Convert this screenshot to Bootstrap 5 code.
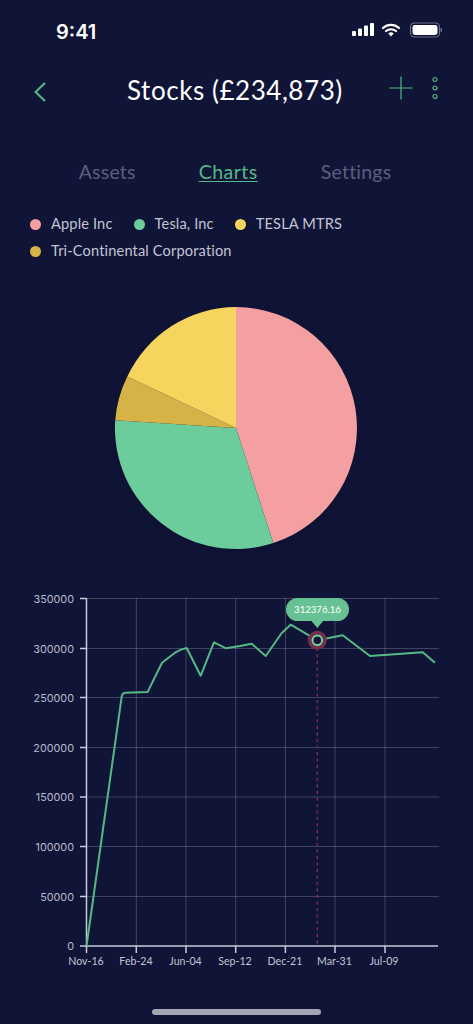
<!doctype html>
<html lang="en">
<head>
<meta charset="utf-8">
<meta name="viewport" content="width=device-width, initial-scale=1">
<title>Stocks</title>
<link href="https://cdn.jsdelivr.net/npm/bootstrap@5.3.0/dist/css/bootstrap.min.css" rel="stylesheet">
<style>
html,body{background:#101437;height:100%}
body{font-family:Lato,"Liberation Sans",sans-serif;color:#fff;overflow:hidden}
.screen{width:473px;height:1024px}
.statusrow{height:62px;padding:21px 29px 0 56px}
.clock{font-family:Inter,"Liberation Sans",sans-serif;font-size:20px;font-weight:600;line-height:22px}
.sysicons{margin-top:1px}
.headrow{height:56px;padding:0 34.5px 0 32px}
.backslot{width:95px;padding-top:2px}
.pagetitle{font-size:26px;font-weight:400;line-height:32px;margin:0 auto 0 0;letter-spacing:.55px;white-space:nowrap}
.actionset{gap:18px;margin-bottom:4px}
.tabrow{margin-top:42px;height:28px;gap:63px;padding-right:3px}
.tablink{padding:0;color:#5c5f7e;font-size:19.5px;line-height:24px;letter-spacing:.2px}
.tablink.active{color:#54b985;letter-spacing:.5px;text-decoration:underline;text-decoration-thickness:1px;text-underline-offset:2px}
.tablink:hover{color:#5c5f7e}
.legendbox{margin-top:25px;padding:0 30px;column-gap:21px;row-gap:5px;height:54px}
.legenditem{font-size:14.6px;line-height:22px;color:#c3c4d2;gap:10px;letter-spacing:.15px}
.swatch{width:11px;height:11px;border-radius:50%;flex:none}
.c-pink{background:#f4a0a2}.c-green{background:#6ccc9c}.c-yellow{background:#f6d55f}.c-gold{background:#d6b346}
.piebox{margin-top:28px;height:265px;padding-left:100px}
.piebox svg{filter:drop-shadow(0 2px 6px rgba(5,8,30,.35))}
.chartbox{margin-top:20px;height:400px}
.chartbox svg text{font-family:Lato,"Liberation Sans",sans-serif;fill:#c3c4d2;font-size:10.6px}
.chartbox svg text.ylab{font-family:Inter,"Liberation Sans",sans-serif;font-size:10.8px;fill:#b9bacb}
.chartbox svg text.tip{fill:#fff;font-size:9.6px}
.homebar{width:169px;height:6px;border-radius:3px;background:#a5a6b3;margin:29px auto 0}
</style>
</head>
<body>
<main class="screen d-flex flex-column">
  <div class="statusrow d-flex justify-content-between align-items-start">
    <span class="clock">9:41</span>
    <svg class="sysicons" width="92" height="16" viewBox="0 0 92 16" aria-hidden="true">
      <rect x="0" y="9" width="4" height="5" rx="1" fill="#fff"/>
      <rect x="6" y="6.5" width="4" height="7.5" rx="1" fill="#fff"/>
      <rect x="12" y="3.5" width="4" height="10.5" rx="1" fill="#fff"/>
      <rect x="18" y="1" width="4" height="13" rx="1" fill="#fff"/>
      <path d="M31 6 A12 12 0 0 1 47 6" fill="none" stroke="#fff" stroke-width="2.2" stroke-linecap="round"/>
      <path d="M34 9 A8 8 0 0 1 44 9" fill="none" stroke="#fff" stroke-width="2.2" stroke-linecap="round"/>
      <path d="M36.3 11.6 L39 14.4 L41.7 11.6 A4 4 0 0 0 36.3 11.6Z" fill="#fff"/>
      <rect x="58.5" y="1" width="29" height="14" rx="4" fill="none" stroke="#6d6f85" stroke-width="1.2"/>
      <rect x="60.5" y="3" width="25" height="10" rx="2.4" fill="#fff"/>
      <rect x="88.5" y="6" width="1.5" height="4" rx=".7" fill="#6d6f85"/>
    </svg>
  </div>
  <header class="headrow d-flex align-items-center">
    <div class="backslot">
      <svg width="16" height="22" viewBox="0 0 16 22" aria-hidden="true"><path d="M13 2 L3.5 11 L13 20" fill="none" stroke="#54b985" stroke-width="2"/></svg>
    </div>
    <h1 class="pagetitle">Stocks (£234,873)</h1>
    <div class="actionset d-flex align-items-center">
      <svg width="24" height="24" viewBox="0 0 24 24" aria-hidden="true"><path d="M12 0.5V23.5M.5 12H23.5" stroke="#54b985" stroke-width="1.2"/></svg>
      <svg width="8" height="24" viewBox="0 0 8 24" aria-hidden="true"><g fill="none" stroke="#54b985" stroke-width="1.2"><circle cx="4" cy="3.5" r="2"/><circle cx="4" cy="12" r="2"/><circle cx="4" cy="20.5" r="2"/></g></svg>
    </div>
  </header>
  <nav class="nav tabrow justify-content-center align-items-start">
    <a class="nav-link tablink" href="#">Assets</a>
    <a class="nav-link tablink active" href="#">Charts</a>
    <a class="nav-link tablink" href="#">Settings</a>
  </nav>
  <div class="legendbox d-flex flex-wrap align-content-start">
    <div class="legenditem d-flex align-items-center"><span class="swatch c-pink"></span>Apple Inc</div>
    <div class="legenditem d-flex align-items-center"><span class="swatch c-green"></span>Tesla, Inc</div>
    <div class="legenditem d-flex align-items-center"><span class="swatch c-yellow"></span>TESLA MTRS</div>
    <div class="legenditem d-flex align-items-center w-100"><span class="swatch c-gold"></span>Tri-Continental Corporation</div>
  </div>
  <div class="piebox">
    <svg width="270" height="265" viewBox="100 295 270 265" aria-label="Pie chart">
      <path d="M236 428 L236 307 A121 121 0 0 1 273.3 543.1Z" fill="#f4a0a2"/>
      <path d="M236 428 L273.3 543.1 A121 121 0 0 1 115.2 420.3Z" fill="#6ccc9c"/>
      <path d="M236 428 L115.2 420.3 A121 121 0 0 1 127.3 376.6Z" fill="#d6b346"/>
      <path d="M236 428 L127.3 376.6 A121 121 0 0 1 236 307Z" fill="#f6d55f"/>
    </svg>
  </div>
  <div class="chartbox">
    <svg width="473" height="400" viewBox="0 580 473 400" aria-label="Line chart">
      <g stroke="#fff" stroke-opacity=".2" stroke-width="1">
        <path d="M86.5 598.5H439M86.5 648.5H439M86.5 697.5H439M86.5 747.5H439M86.5 797H439M86.5 846.5H439M86.5 896.5H439"/>
        <path d="M136.3 598V946M186 598V946M235.7 598V946M285.4 598V946M335 598V946M385 598V946"/>
      </g>
      <g stroke="#c9cad9" stroke-width="1.5" fill="none">
        <path d="M86.5 598V946H438"/>
        <path d="M80 598.5H86M80 648.5H86M80 697.5H86M80 747.5H86M80 797H86M80 846.5H86M80 896.5H86M80 946H86"/>
        <path d="M86.5 946V953M136.3 946V953M186 946V953M235.7 946V953M285.4 946V953M335 946V953M385 946V953"/>
      </g>
      <g text-anchor="end">
        <text class="ylab" x="74" y="603">350000</text>
        <text class="ylab" x="74" y="652.5">300000</text>
        <text class="ylab" x="74" y="702">250000</text>
        <text class="ylab" x="74" y="752">200000</text>
        <text class="ylab" x="74" y="801">150000</text>
        <text class="ylab" x="74" y="851">100000</text>
        <text class="ylab" x="74" y="900.5">50000</text>
        <text class="ylab" x="74" y="949.5">0</text>
      </g>
      <g text-anchor="middle">
        <text x="86" y="965">Nov-16</text>
        <text x="136" y="965">Feb-24</text>
        <text x="185.5" y="965">Jun-04</text>
        <text x="235" y="965">Sep-12</text>
        <text x="285" y="965">Dec-21</text>
        <text x="334.5" y="965">Mar-31</text>
        <text x="384" y="965">Jul-09</text>
      </g>
      <path d="M317.3 648V946" stroke="#7a3048" stroke-width="1.4" stroke-dasharray="3 3.5"/>
      <path d="M86.5 946 L121.7 696.7 Q122.5 692.8 125.5 692.7 L147.7 691.9 L162 662.7 L175 652.7 Q181 649 186.7 648 L200.7 675.7 L214 642.3 L226 648.3 L240 646 L251.7 643.7 L265.7 656 L281.7 633 L290.7 624.7 L317.3 640.3 L342.7 635.3 L370 656 L422.7 652.3 L435 662.7" fill="none" stroke="#54b985" stroke-width="2" stroke-linejoin="round"/>
      <circle cx="317.3" cy="640.3" r="9.5" fill="#74304a"/>
      <circle cx="317.3" cy="640.3" r="4.8" fill="#101437" stroke="#6fd0a2" stroke-width="2"/>
      <rect x="286" y="598" width="63" height="23" rx="11.5" fill="#66c294"/>
      <path d="M311 620.5H323.6L317.3 628Z" fill="#66c294"/>
      <text class="tip" x="317.5" y="613" text-anchor="middle">312376.16</text>
    </svg>
  </div>
  <div class="homebar"></div>
</main>
<script src="https://cdn.jsdelivr.net/npm/bootstrap@5.3.0/dist/js/bootstrap.bundle.min.js"></script>
</body>
</html>
